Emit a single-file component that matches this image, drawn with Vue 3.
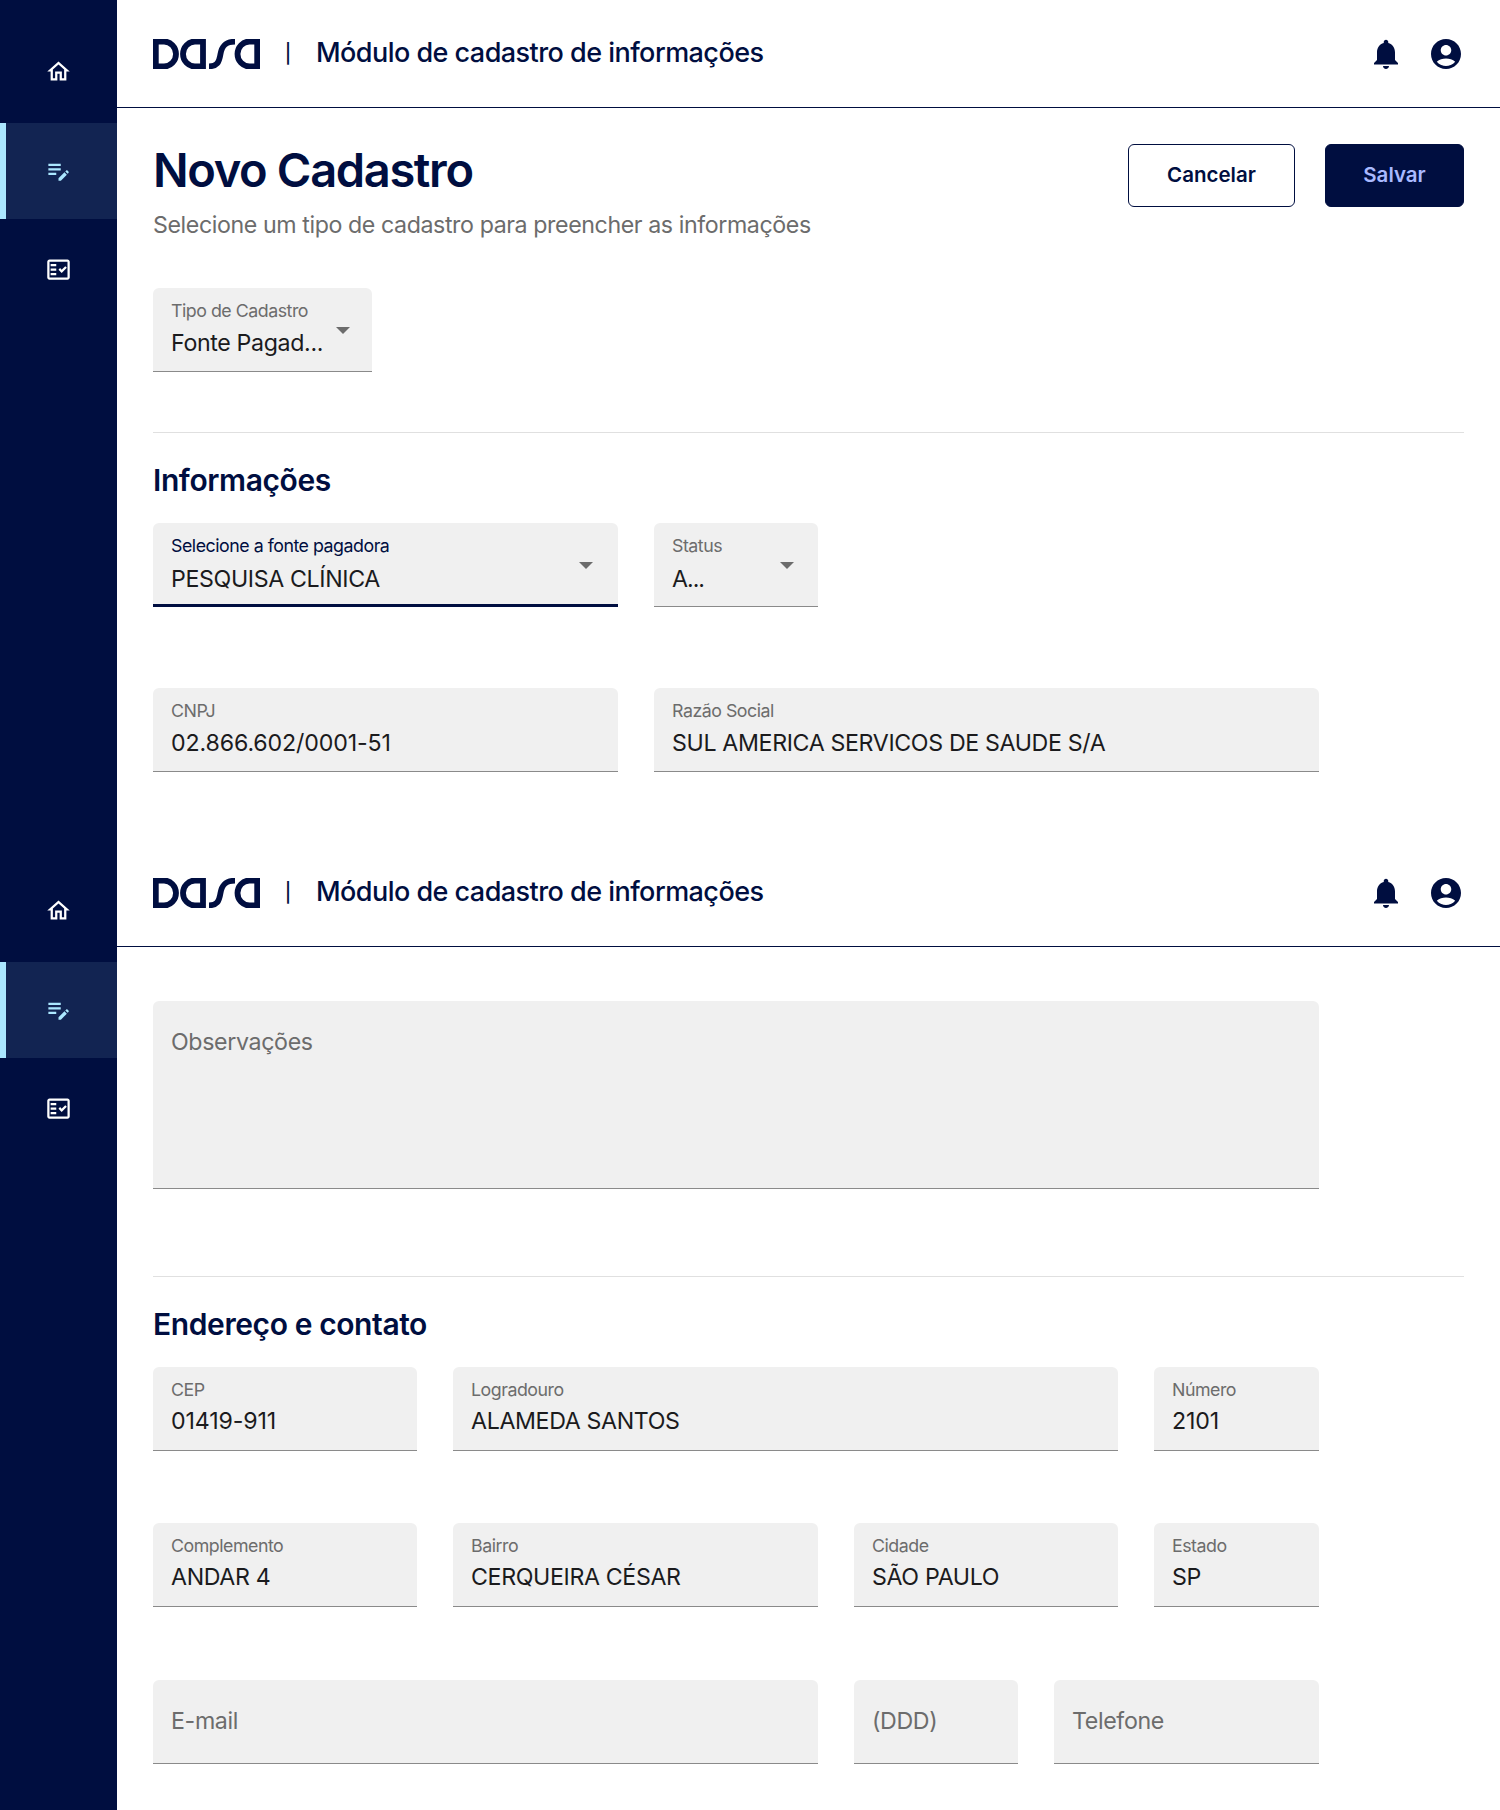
<script setup>
const panels = [
  {
    id: 'cadastro',
    title: 'Novo Cadastro',
    subtitle: 'Selecione um tipo de cadastro para preencher as informações',
    tipo: { label: 'Tipo de Cadastro', value: 'Fonte Pagad...', size: 'w-tipo', select: true },
    sections: [
      {
        heading: 'Informações',
        rows: [
          [
            { label: 'Selecione a fonte pagadora', value: 'PESQUISA CLÍNICA', size: 'w-465', select: true, focused: true },
            { label: 'Status', value: 'A...', size: 'w-164', select: true, low: true },
          ],
          [
            { label: 'CNPJ', value: '02.866.602/0001-51', size: 'w-465', numeric: true },
            { label: 'Razão Social', value: 'SUL AMERICA SERVICOS DE SAUDE S/A', size: 'w-665' },
          ],
        ],
      },
    ],
  },
  {
    id: 'endereco',
    notes: 'Observações',
    sections: [
      {
        heading: 'Endereço e contato',
        rows: [
          [
            { label: 'CEP', value: '01419-911', size: 'w-264', numeric: true, high: true },
            { label: 'Logradouro', value: 'ALAMEDA SANTOS', size: 'w-665', high: true },
            { label: 'Número', value: '2101', size: 'w-165', numeric: true, high: true },
          ],
          [
            { label: 'Complemento', value: 'ANDAR 4', size: 'w-264', high: true },
            { label: 'Bairro', value: 'CERQUEIRA CÉSAR', size: 'w-365', high: true },
            { label: 'Cidade', value: 'SÃO PAULO', size: 'w-264', high: true },
            { label: 'Estado', value: 'SP', size: 'w-165', high: true },
          ],
          [
            { placeholder: 'E-mail', size: 'w-665' },
            { placeholder: '(DDD)', size: 'w-164' },
            { placeholder: 'Telefone', size: 'w-265' },
          ],
        ],
      },
    ],
  },
]
</script>

<template>
  <div class="page">
    <div v-for="panel in panels" :key="panel.id" class="shell" :class="panel.id">
      <nav class="sidebar">
        <a class="nav-item">
          <svg viewBox="0 0 24 24"><path d="M12 5.69l5 4.5V18h-2v-6H9v6H7v-7.81l5-4.5M12 3L2 12h3v8h6v-6h2v6h6v-8h3L12 3z" /></svg>
        </a>
        <a class="nav-item active">
          <svg viewBox="0 0 24 24"><path d="M3 10h11v2H3v-2zm0-2h11V6H3v2zm0 8h7v-2H3v2zm15.01-3.13.71-.71c.39-.39 1.02-.39 1.41 0l.71.71c.39.39.39 1.02 0 1.41l-.71.71-2.12-2.12zm-.71.71-5.3 5.3V21h2.12l5.3-5.3-2.12-2.12z" /></svg>
        </a>
        <a class="nav-item">
          <svg viewBox="0 0 24 24">
            <path fill-rule="evenodd" d="M20 3H4c-1.1 0-2 .9-2 2v14c0 1.1.9 2 2 2h16c1.1 0 2-.9 2-2V5c0-1.1-.9-2-2-2zm0 16H4V5h16v14z" />
            <path d="M19.41 10.42 17.99 9l-3.17 3.17-1.41-1.42L12 12.16 14.82 15zM5 7h5v2H5zM5 11h5v2H5zM5 15h5v2H5z" />
          </svg>
        </a>
      </nav>

      <div class="main">
        <header class="topbar">
          <svg class="logo" viewBox="0 0 107 30">
            <path d="M2.8 2.5H11a12 12.5 0 0 1 0 25H2.8Z" />
            <path d="M50 2.5H42a12 12.5 0 0 0 0 25h8Z" />
            <path d="M56 27.3c8 0 10-3.5 11.5-12.3S73 2.7 82 2.7" />
            <path d="M104.2 2.5H96.5a12 12.5 0 0 0 0 25h7.7Z" />
          </svg>
          <span class="divider">|</span>
          <span class="app-title">Módulo de cadastro de informações</span>
          <div class="actions">
            <svg viewBox="0 0 24 24"><path d="M12 22c1.1 0 2-.9 2-2h-4c0 1.1.89 2 2 2zm6-6v-5c0-3.07-1.64-5.64-4.5-6.32V4c0-.83-.67-1.5-1.5-1.5s-1.5.67-1.5 1.5v.68C7.63 5.36 6 7.92 6 11v5l-2 2v1h16v-1l-2-2z" /></svg>
            <svg viewBox="0 0 24 24"><path d="M12 2C6.48 2 2 6.48 2 12s4.48 10 10 10 10-4.48 10-10S17.52 2 12 2zm0 4c1.93 0 3.5 1.57 3.5 3.5S13.93 13 12 13s-3.5-1.57-3.5-3.5S10.07 6 12 6zm0 14c-2.03 0-4.43-.82-6.14-2.88C7.55 15.8 9.68 15 12 15s4.45.8 6.14 2.12C16.43 19.18 14.03 20 12 20z" /></svg>
          </div>
        </header>

        <main class="content">
          <template v-if="panel.title">
            <div class="intro">
              <div>
                <h1>{{ panel.title }}</h1>
                <p class="subtitle">{{ panel.subtitle }}</p>
              </div>
              <div class="buttons">
                <button class="btn cancel">Cancelar</button>
                <button class="btn save">Salvar</button>
              </div>
            </div>
            <div class="field" :class="panel.tipo.size">
              <span class="label">{{ panel.tipo.label }}</span>
              <span class="value">{{ panel.tipo.value }}</span>
              <i class="arrow"></i>
            </div>
          </template>

          <div v-if="panel.notes" class="field notes">
            <span class="placeholder">{{ panel.notes }}</span>
          </div>

          <section v-for="section in panel.sections" :key="section.heading">
            <h2>{{ section.heading }}</h2>
            <div class="rows">
              <div v-for="(row, r) in section.rows" :key="r" class="row">
                <div
                  v-for="field in row"
                  :key="field.label || field.placeholder"
                  class="field"
                  :class="[field.size, { focused: field.focused, low: field.low, high: field.high, numeric: field.numeric }]"
                >
                  <template v-if="field.label">
                    <span class="label">{{ field.label }}</span>
                    <span class="value">{{ field.value }}</span>
                  </template>
                  <span v-else class="placeholder">{{ field.placeholder }}</span>
                  <i v-if="field.select" class="arrow"></i>
                </div>
              </div>
            </div>
          </section>
        </main>
      </div>
    </div>
  </div>
</template>

<style>
body {
  margin: 0;
  background: #fff;
}
</style>

<style scoped>
* {
  box-sizing: border-box;
}
.page {
  width: 1500px;
  height: 1810px;
  overflow: hidden;
  font-family: Inter, "Liberation Sans", sans-serif;
  color: #000e40;
}
.shell {
  display: flex;
}
.shell.cadastro {
  height: 839px;
}
.shell.endereco {
  height: 971px;
}

.sidebar {
  display: flex;
  flex-direction: column;
  gap: 3px;
  flex: none;
  width: 117px;
  padding-top: 24px;
  background: #000e40;
}
.nav-item {
  display: flex;
  align-items: center;
  justify-content: center;
  height: 96px;
  padding-bottom: 1px;
}
.nav-item svg {
  width: 27px;
  height: 27px;
  fill: #fff;
}
.nav-item.active {
  background: #122452;
  border-left: 6px solid #abe7ff;
  padding-right: 6px;
}
.nav-item.active svg {
  fill: #abe7ff;
}

.main {
  flex: 1;
  min-width: 0;
}
.topbar {
  display: flex;
  align-items: center;
  height: 108px;
  padding: 0 36px;
  border-bottom: 1px solid #000e40;
}
.logo {
  width: 107px;
  height: 30px;
  fill: none;
  stroke: #000e40;
  stroke-width: 5.8;
}
.divider {
  width: 16px;
  margin: 0 20px;
  text-align: center;
  font-size: 19px;
  font-weight: 500;
}
.app-title {
  margin-top: -2px;
  font-size: 27px;
  font-weight: 500;
  letter-spacing: -0.54px;
  line-height: 34px;
  white-space: nowrap;
}
.actions {
  display: flex;
  gap: 24px;
  margin-left: auto;
}
.actions svg {
  width: 36px;
  height: 36px;
  fill: #000e40;
}

.content {
  padding: 34px 36px 0;
}
.endereco .content {
  padding-top: 54px;
}
.intro {
  display: flex;
  justify-content: space-between;
  margin-bottom: 48px;
}
h1 {
  margin: 0 0 12px;
  font-size: 47px;
  font-weight: 600;
  letter-spacing: -1.35px;
  line-height: 56px;
}
.subtitle {
  margin: 0;
  color: #6c6c6c;
  font-size: 23.2px;
  font-weight: 400;
  letter-spacing: -0.41px;
  line-height: 30px;
  white-space: nowrap;
}
.buttons {
  display: flex;
  gap: 30px;
  padding-top: 2px;
}
.btn {
  height: 63px;
  padding: 0 0 2px;
  border: 1px solid #000e40;
  border-radius: 6px;
  background: #fff;
  color: #000e40;
  font-family: inherit;
  font-size: 20.5px;
  font-weight: 600;
}
.cancel {
  width: 167px;
}
.save {
  width: 139px;
  background: #000e40;
  color: #a9b9ff;
}

section {
  margin-top: 60px;
  border-top: 1px solid #e0e0e0;
}
.endereco section {
  margin-top: 87px;
}
h2 {
  margin: 29px 0 25px;
  font-size: 30px;
  font-weight: 600;
  letter-spacing: -0.4px;
  line-height: 36px;
}
.rows {
  display: flex;
  flex-direction: column;
  gap: 81px;
}
.endereco .rows {
  gap: 72px;
}
.endereco .row:last-child {
  margin-top: 1px;
}
.row {
  display: flex;
  gap: 36px;
}

.field {
  position: relative;
  display: flex;
  flex-direction: column;
  height: 84px;
  padding: 12px 18px 0;
  background: #f0f0f0;
  border-bottom: 1px solid #8a8a8a;
  border-radius: 6px 6px 0 0;
  white-space: nowrap;
}
.field.focused {
  border-bottom: 3px solid #000e40;
}
.label {
  color: #6c6c6c;
  font-size: 17.8px;
  font-weight: 400;
  letter-spacing: -0.48px;
  line-height: 22px;
}
.focused .label {
  color: #000e40;
}
.value {
  margin-top: 6px;
  color: #1b1b1d;
  font-size: 23.2px;
  font-weight: 400;
  letter-spacing: -0.36px;
  line-height: 30px;
}
.numeric .value {
  letter-spacing: -0.14px;
}
.high .value {
  margin-top: 5px;
}
.focused .value,
.low .value {
  margin-top: 7px;
}
.low .value {
  letter-spacing: -1px;
}
.placeholder {
  margin-top: 14px;
  color: #6c6c6c;
  font-size: 23.2px;
  font-weight: 400;
  letter-spacing: -0.36px;
  line-height: 30px;
}
.notes {
  width: 1166px;
  height: 188px;
}
.arrow {
  position: absolute;
  top: 39px;
  right: 22px;
  border: 7.5px solid transparent;
  border-top-color: #6c6c6c;
  border-bottom: 0;
}
.focused .arrow {
  right: 25px;
}
.low .arrow {
  right: 24px;
}

.w-tipo {
  width: 219px;
}
.w-164 {
  width: 164px;
}
.w-165 {
  width: 165px;
}
.w-264 {
  width: 264px;
}
.w-265 {
  width: 265px;
}
.w-365 {
  width: 365px;
}
.w-465 {
  width: 465px;
}
.w-665 {
  width: 665px;
}
</style>
